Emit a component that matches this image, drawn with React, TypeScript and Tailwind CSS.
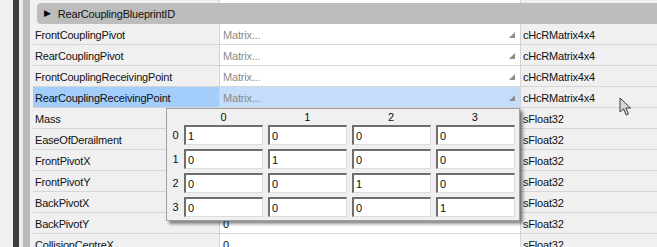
import React from "react";

const rows = [
  { name: "FrontCouplingPivot", value: "Matrix...", type: "cHcRMatrix4x4", matrix: true },
  { name: "RearCouplingPivot", value: "Matrix...", type: "cHcRMatrix4x4", matrix: true },
  { name: "FrontCouplingReceivingPoint", value: "Matrix...", type: "cHcRMatrix4x4", matrix: true },
  { name: "RearCouplingReceivingPoint", value: "Matrix...", type: "cHcRMatrix4x4", matrix: true, selected: true },
  { name: "Mass", value: "", type: "sFloat32" },
  { name: "EaseOfDerailment", value: "", type: "sFloat32" },
  { name: "FrontPivotX", value: "", type: "sFloat32" },
  { name: "FrontPivotY", value: "", type: "sFloat32" },
  { name: "BackPivotX", value: "", type: "sFloat32" },
  { name: "BackPivotY", value: "0", type: "sFloat32" },
  { name: "CollisionCentreX", value: "0", type: "sFloat32" },
];

const matrix = [
  ["1", "0", "0", "0"],
  ["0", "1", "0", "0"],
  ["0", "0", "1", "0"],
  ["0", "0", "0", "1"],
];

const Grip = () => (
  <svg width="6" height="6" viewBox="0 0 6 6" className="shrink-0">
    <polygon points="6,0 6,6 0,6" fill="#8c8c8c" />
  </svg>
);

const Cursor = () => (
  <svg width="14" height="20" viewBox="0 0 14 20">
    <path
      d="M1 1 L1 15 L4.5 11.8 L7.2 18 L9.4 17 L6.8 11 L11.5 11 Z"
      fill="#d8d8d8"
      stroke="#3a3a3a"
      strokeWidth="1"
      strokeLinejoin="miter"
    />
  </svg>
);

const MatrixPopup = () => (
  <div className="absolute left-[166px] top-[108px] w-[354px] h-[113px] bg-[#f0f0f0] border border-[#a0a0a0] shadow-[3px_3px_3px_rgba(0,0,0,0.45)] flex flex-col">
    <div className="flex h-[16px] items-center pl-[17px]">
      {[0, 1, 2, 3].map((c) => (
        <div key={c} className="w-[79px] mr-[5px] text-center leading-none">
          {c}
        </div>
      ))}
    </div>
    <div className="flex flex-col gap-[4px]">
      {matrix.map((r, i) => (
        <div key={i} className="flex h-[20px] items-center">
          <div className="w-[17px] text-center pt-[1px]">{i}</div>
          <div className="flex gap-[5px]">
            {r.map((v, j) => (
              <div
                key={j}
                className="w-[79px] h-[20px] bg-white border-t-2 border-l-2 border-[#6e6e6e] border-r border-b border-r-[#dcdcdc] border-b-[#dcdcdc] pl-[2px] pt-[1px] flex items-center"
              >
                {v}
              </div>
            ))}
          </div>
        </div>
      ))}
    </div>
  </div>
);

export default function App() {
  return (
    <div
      className="relative w-[657px] h-[247px] overflow-hidden bg-[#f0f0f0] flex text-[11px] tracking-[-0.2px] text-[#111]"
      style={{ fontFamily: '"Liberation Sans", Arial, sans-serif' }}
    >
      <div className="w-[13px] bg-[#f0f0f0]" />
      <div className="w-[6px] bg-[#3c3c3c]" />
      <div className="w-[4px] bg-[#ececec]" />
      <div className="w-[7px] bg-[#b9b9b9]" />
      <div className="w-[3px] bg-[#f0f0f0]" />

      <div className="flex-1 flex flex-col">
        <div className="flex h-[3px] shrink-0">
          <div className="w-[187px] border-r border-[#d4d4d4]" />
          <div className="w-[300px] bg-white" />
          <div className="flex-1 border-l border-[#d4d4d4]" />
        </div>
        <div className="h-[21px] shrink-0 ml-[4px] bg-[#bdbdbd] rounded-l-[4px] flex items-center">
          <span className="ml-[7px] mr-[7px] text-[9px] leading-none text-black">▶</span>
          <span className="pt-[1px]">RearCouplingBlueprintID</span>
        </div>
        {rows.map((r) => (
          <div key={r.name} className="flex h-[21px] shrink-0 border-b border-[#d6d6d6]">
            <div
              className={`w-[187px] pl-[2px] pt-[2px] flex items-center border-r border-[#d4d4d4] ${
                r.selected ? "bg-[#a3cdfb]" : ""
              }`}
            >
              {r.name}
            </div>
            <div
              className={`w-[300px] pl-[3px] pr-[5px] pt-[2px] flex items-center justify-between ${
                r.selected ? "bg-[#c4ddfa]" : "bg-white"
              } ${r.matrix ? "text-[#8a8a8a]" : ""}`}
            >
              <span>{r.value}</span>
              {r.matrix && <Grip />}
            </div>
            <div className="flex-1 pl-[2px] pt-[2px] flex items-center border-l border-[#d4d4d4]">
              {r.type}
            </div>
          </div>
        ))}
      </div>

      <MatrixPopup />

      <div className="absolute left-[619px] top-[97px]">
        <Cursor />
      </div>
    </div>
  );
}
